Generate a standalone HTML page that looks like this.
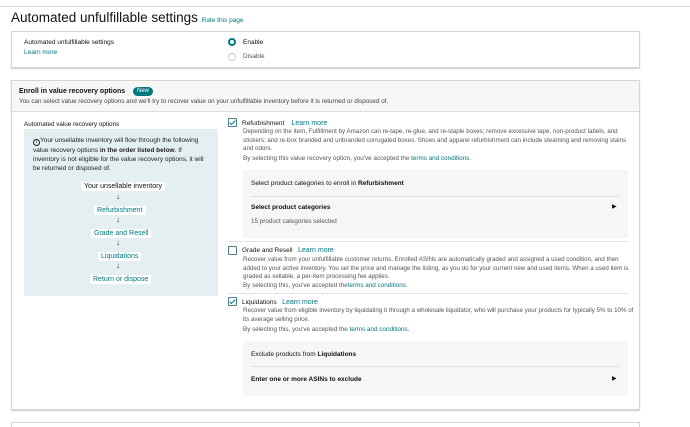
<!DOCTYPE html>
<html style="width:690px;height:427px;overflow:hidden"><head><meta charset="utf-8"><style>
*{margin:0;padding:0;box-sizing:border-box}
body{width:690px;height:427px;overflow:hidden;background:#fff;font-family:"Liberation Sans",sans-serif;color:#111;position:relative;font-size:7px}
.a{position:absolute;white-space:nowrap}
.l{color:#00767f}
.box{position:absolute;left:11px;width:629px;border:1px solid #d5d5d5;box-shadow:0 1px 1px #ccc;background:#fff}
.g{color:#555}
.cb{position:absolute;width:9px;height:9px;border:1px solid #4a7f8a;border-radius:1px;background:#fff}
.cb.on::after{content:"";position:absolute;left:2px;top:0px;width:2px;height:5px;border:solid #00767f;border-width:0 1.2px 1.2px 0;transform:rotate(45deg)}
.gray{position:absolute;background:#f6f6f6}
.flow{position:absolute;background:#fff;padding:1px 3px;font-size:7px}
.arr{position:absolute;left:116px;font-size:8px;color:#333}
</style></head><body>
<div class="a" style="left:0;top:6px;width:690px;border-top:1px solid #ddd"></div>
<div class="a" style="left:11px;top:10px;font-size:13.5px;color:#111">Automated unfulfillable settings <span class="l" style="font-size:6.5px">Rate this page</span></div>

<div class="box" style="top:31px;height:37px"></div>
<div class="a" style="left:24px;top:39px;font-size:6.5px">Automated unfulfillable settings</div>
<div class="a l" style="left:24px;top:49px;font-size:6.5px">Learn more</div>
<div class="a" style="left:228px;top:38px;width:8px;height:8px;border-radius:50%;border:2.5px solid #00767f"></div>
<div class="a" style="left:243px;top:39px;font-size:6.5px">Enable</div>
<div class="a" style="left:228px;top:53px;width:8px;height:8px;border-radius:50%;border:1px solid #ccc"></div>
<div class="a g" style="left:243px;top:53px;font-size:6.5px">Disable</div>

<div class="box" style="top:80px;height:330px"></div>
<div class="a" style="left:12px;top:81px;width:627px;height:31px;background:#f7f7f7;border-bottom:1px solid #ddd"></div>
<div class="a" style="left:19px;top:88px;font-weight:bold;font-size:7px">Enroll in value recovery options</div>
<div class="a" style="left:133px;top:87px;background:#00767f;color:#fff;border-radius:6px;padding:0 4px;font-size:6px;line-height:9px">New</div>
<div class="a" style="left:19px;top:98px;font-size:6.3px;color:#444">You can select value recovery options and we'll try to recover value on your unfulfillable inventory before it is returned or disposed of.</div>

<div class="a" style="left:24px;top:121px;font-size:6.3px">Automated value recovery options</div>
<div class="a" style="left:24px;top:129px;width:194px;height:167px;background:#e3eff0"></div>
<div class="a" style="left:33px;top:136px;font-size:6.5px;line-height:9px;white-space:normal;width:176px;color:#222"><span style="display:inline-block;width:7px;height:7px;border:1px solid #222;border-radius:50%;font-size:5px;text-align:center;line-height:5px;vertical-align:-1px">i</span>Your unsellable inventory will flow through the following value recovery options <b>in the order listed below</b>. If inventory is not eligible for the value recovery options, it will be returned or disposed of.</div>
<div class="flow a" style="left:81px;top:182px">Your unsellable inventory</div>
<div class="arr" style="top:192px">↓</div>
<div class="flow a l" style="left:94px;top:206px">Refurbishment</div>
<div class="arr" style="top:215px">↓</div>
<div class="flow a l" style="left:91px;top:229px">Grade and Resell</div>
<div class="arr" style="top:238px">↓</div>
<div class="flow a l" style="left:98px;top:252px">Liquidations</div>
<div class="arr" style="top:261px">↓</div>
<div class="flow a l" style="left:90px;top:275px">Return or dispose</div>

<div class="cb on" style="left:228px;top:118px"></div>
<div class="a" style="left:242px;top:120px;font-size:6.5px">Refurbishment &nbsp;&nbsp;&nbsp;<span class="l" style="font-size:7px">Learn more</span></div>
<div class="a g" style="left:243px;top:128px;font-size:6.2px;line-height:8.5px;white-space:normal;width:392px">Depending on the item, Fulfillment by Amazon can re-tape, re-glue, and re-staple boxes; remove excessive tape, non-product labels, and stickers; and re-box branded and unbranded corrugated boxes. Shoes and apparel refurbishment can include steaming and removing stains and odors.</div>
<div class="a g" style="left:243px;top:155px;font-size:6.3px">By selecting this value recovery option, you've accepted the <span class="l">terms and conditions</span>.</div>
<div class="gray" style="left:243px;top:170px;width:385px;height:68px"></div>
<div class="a" style="left:251px;top:180px;font-size:6.5px">Select product categories to enroll in <b>Refurbishment</b></div>
<div class="a" style="left:251px;top:196px;width:368px;border-top:1px solid #e2e2e2"></div>
<div class="a" style="left:251px;top:204px;font-size:6.5px;font-weight:bold">Select product categories</div>
<div class="a" style="left:612px;top:203px;font-size:6px">▶</div>
<div class="a g" style="left:251px;top:218px;font-size:6.3px">15 product categories selected</div>
<div class="a" style="left:228px;top:241px;width:400px;border-top:1px solid #e2e2e2"></div>

<div class="cb" style="left:228px;top:246px"></div>
<div class="a" style="left:242px;top:247px;font-size:6.5px">Grade and Resell &nbsp;&nbsp;<span class="l" style="font-size:7px">Learn more</span></div>
<div class="a g" style="left:243px;top:256px;font-size:6.2px;line-height:8.5px;white-space:normal;width:392px">Recover value from your unfulfillable customer returns. Enrolled ASINs are automatically graded and assigned a used condition, and then added to your active inventory. You set the price and manage the listing, as you do for your current new and used items. When a used item is graded as sellable, a per-item processing fee applies.</div>
<div class="a g" style="left:243px;top:282px;font-size:6.3px">By selecting this, you've accepted the<span class="l">terms and conditions</span>.</div>
<div class="a" style="left:228px;top:293px;width:400px;border-top:1px solid #e2e2e2"></div>

<div class="cb on" style="left:228px;top:297px"></div>
<div class="a" style="left:242px;top:299px;font-size:6.5px">Liquidations &nbsp;&nbsp;<span class="l" style="font-size:7px">Learn more</span></div>
<div class="a g" style="left:243px;top:307px;font-size:6.2px;line-height:8.5px;white-space:normal;width:392px">Recover value from eligible inventory by liquidating it through a wholesale liquidator, who will purchase your products for typically 5% to 10% of its average selling price.</div>
<div class="a g" style="left:243px;top:326px;font-size:6.3px">By selecting this, you've accepted the <span class="l">terms and conditions</span>.</div>
<div class="gray" style="left:243px;top:341px;width:385px;height:55px"></div>
<div class="a" style="left:251px;top:351px;font-size:6.5px">Exclude products from <b>Liquidations</b></div>
<div class="a" style="left:251px;top:366px;width:368px;border-top:1px solid #e2e2e2"></div>
<div class="a" style="left:251px;top:376px;font-size:6.5px;font-weight:bold">Enter one or more ASINs to exclude</div>
<div class="a" style="left:612px;top:375px;font-size:6px">▶</div>

<div class="a" style="left:11px;top:422px;width:629px;height:5px;border:1px solid #d5d5d5;border-bottom:none"></div>
</body></html>
